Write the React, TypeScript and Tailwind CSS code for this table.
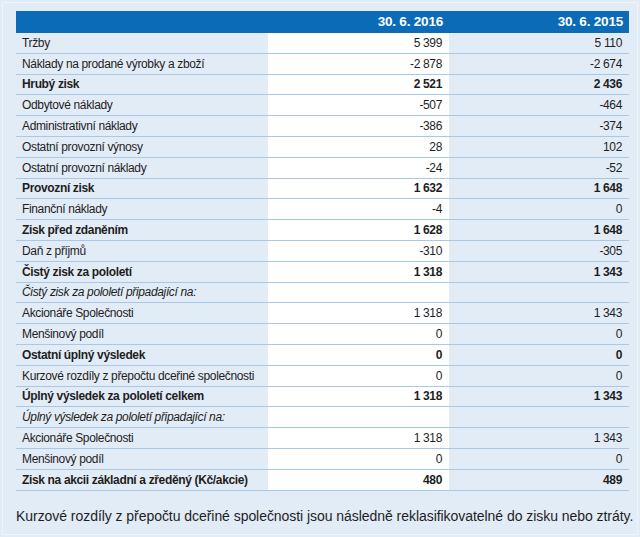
import React from "react";

type Row = {
  label: string;
  a: string;
  b: string;
  bold?: boolean;
  italic?: boolean;
};

const rows: Row[] = [
  { label: "Tržby", a: "5 399", b: "5 110" },
  { label: "Náklady na prodané výrobky a zboží", a: "-2 878", b: "-2 674" },
  { label: "Hrubý zisk", a: "2 521", b: "2 436", bold: true },
  { label: "Odbytové náklady", a: "-507", b: "-464" },
  { label: "Administrativní náklady", a: "-386", b: "-374" },
  { label: "Ostatní provozní výnosy", a: "28", b: "102" },
  { label: "Ostatní provozní náklady", a: "-24", b: "-52" },
  { label: "Provozní zisk", a: "1 632", b: "1 648", bold: true },
  { label: "Finanční náklady", a: "-4", b: "0" },
  { label: "Zisk před zdaněním", a: "1 628", b: "1 648", bold: true },
  { label: "Daň z příjmů", a: "-310", b: "-305" },
  { label: "Čistý zisk za pololetí", a: "1 318", b: "1 343", bold: true },
  { label: "Čistý zisk za pololetí připadající na:", a: "", b: "", italic: true },
  { label: "Akcionáře Společnosti", a: "1 318", b: "1 343" },
  { label: "Menšinový podíl", a: "0", b: "0" },
  { label: "Ostatní úplný výsledek", a: "0", b: "0", bold: true },
  { label: "Kurzové rozdíly z přepočtu dceřiné společnosti", a: "0", b: "0" },
  { label: "Úplný výsledek za pololetí celkem", a: "1 318", b: "1 343", bold: true },
  { label: "Úplný výsledek za pololetí připadající na:", a: "", b: "", italic: true },
  { label: "Akcionáře Společnosti", a: "1 318", b: "1 343" },
  { label: "Menšinový podíl", a: "0", b: "0" },
  { label: "Zisk na akcii základní a zředěný (Kč/akcie)", a: "480", b: "489", bold: true },
];

export default function App() {
  return (
    <div
      className="w-[640px] h-[537px] bg-[#e2ecf7] p-[2px] text-[#1e1e1e]"
      style={{ fontFamily: '"Liberation Sans", Arial, sans-serif' }}
    >
      <div className="h-full border border-[#eef4fa] px-[13px] pt-[8px]">
        <div className="grid grid-cols-[252px_181px_180px] text-[12px] tracking-[-0.35px]">
          <div className="h-[22px] bg-[#0b6bb7]" />
          <div className="h-[22px] bg-[#0b6bb7] text-white font-bold text-[13.5px] tracking-[-0.2px] flex items-center justify-end pr-[6px]">
            30. 6. 2016
          </div>
          <div className="h-[22px] bg-[#0b6bb7] text-white font-bold text-[13.5px] tracking-[-0.2px] flex items-center justify-end pr-[6px]">
            30. 6. 2015
          </div>
          {rows.map((r, i) => {
            const weight = r.bold ? "font-bold" : "";
            return (
              <React.Fragment key={i}>
                <div
                  className={`h-[20.8px] border-b border-[#a7c8e6] flex items-center pl-[6px] whitespace-nowrap ${weight} ${
                    r.italic ? "italic" : ""
                  }`}
                >
                  {r.label}
                </div>
                <div
                  className={`h-[20.8px] border-b border-[#a7c8e6] bg-white flex items-center justify-end pr-[7px] ${weight}`}
                >
                  {r.a}
                </div>
                <div
                  className={`h-[20.8px] border-b border-[#a7c8e6] flex items-center justify-end pr-[7px] ${weight}`}
                >
                  {r.b}
                </div>
              </React.Fragment>
            );
          })}
        </div>
        <p className="mt-[15px] text-[14px] tracking-[-0.05px] whitespace-nowrap">
          Kurzové rozdíly z přepočtu dceřiné společnosti jsou následně reklasifikovatelné do zisku nebo ztráty.
        </p>
      </div>
    </div>
  );
}
